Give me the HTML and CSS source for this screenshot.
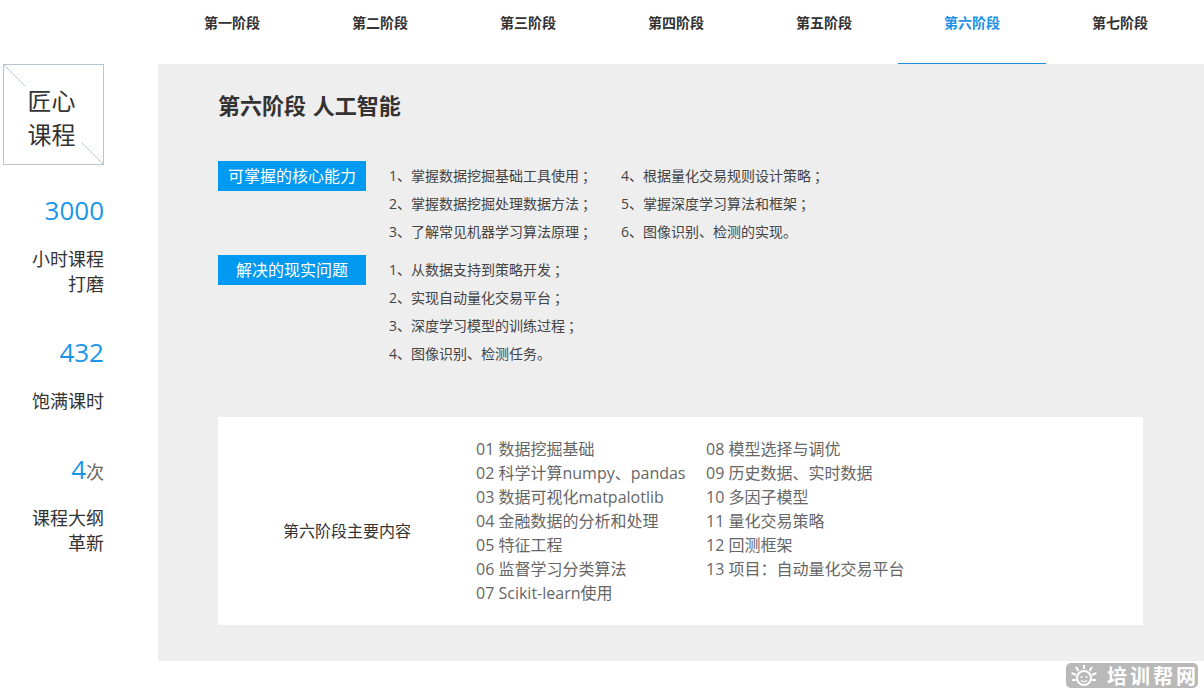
FILE: index.html
```html
<!DOCTYPE html>
<html lang="zh-CN">
<head>
    <meta charset="UTF-8">
    <title>人工智能课程</title>
    <link rel="stylesheet" href="styles.css">
</head>
<body>
    <!-- 阶段导航 -->
    <nav class="navbar">
        <a href="#">第一阶段</a>
        <a href="#">第二阶段</a>
        <a href="#">第三阶段</a>
        <a href="#">第四阶段</a>
        <a href="#">第五阶段</a>
        <a href="#" class="active">第六阶段</a>
        <a href="#">第七阶段</a>
    </nav>

    <div class="main">
        <!-- 左侧 -->
        <aside class="side">
            <div class="logo-box">
                <div>匠心<br>课程</div>
            </div>
            <div class="stat stat-first">
                <div class="stat-num">3000</div>
                <div class="stat-label">小时课程<br>打磨</div>
            </div>
            <div class="stat">
                <div class="stat-num">432</div>
                <div class="stat-label">饱满课时</div>
            </div>
            <div class="stat">
                <div class="stat-num">4<span class="stat-unit">次</span></div>
                <div class="stat-label">课程大纲<br>革新</div>
            </div>
        </aside>

        <!-- 内容 -->
        <section class="panel">
            <h2 class="panel-title">第六阶段 人工智能</h2>

            <div class="block block-first">
                <div class="tag">可掌握的核心能力</div>
                <ul class="list">
                    <li>1、掌握数据挖掘基础工具使用<span class="mark">；</span></li>
                    <li>2、掌握数据挖掘处理数据方法<span class="mark">；</span></li>
                    <li>3、了解常见机器学习算法原理<span class="mark">；</span></li>
                </ul>
                <ul class="list">
                    <li>4、根据量化交易规则设计策略<span class="mark">；</span></li>
                    <li>5、掌握深度学习算法和框架<span class="mark">；</span></li>
                    <li>6、图像识别、检测的实现。</li>
                </ul>
            </div>

            <div class="block">
                <div class="tag">解决的现实问题</div>
                <ul class="list">
                    <li>1、从数据支持到策略开发<span class="mark">；</span></li>
                    <li>2、实现自动量化交易平台<span class="mark">；</span></li>
                    <li>3、深度学习模型的训练过程<span class="mark">；</span></li>
                    <li>4、图像识别、检测任务。</li>
                </ul>
            </div>

            <div class="card">
                <div class="card-label">第六阶段主要内容</div>
                <ul class="card-list card-list-left">
                    <li>01 数据挖掘基础</li>
                    <li>02 科学计算numpy、pandas</li>
                    <li>03 数据可视化matpalotlib</li>
                    <li>04 金融数据的分析和处理</li>
                    <li>05 特征工程</li>
                    <li>06 监督学习分类算法</li>
                    <li>07 Scikit-learn使用</li>
                </ul>
                <ul class="card-list">
                    <li>08 模型选择与调优</li>
                    <li>09 历史数据、实时数据</li>
                    <li>10 多因子模型</li>
                    <li>11 量化交易策略</li>
                    <li>12 回测框架</li>
                    <li>13 项目：自动量化交易平台</li>
                </ul>
            </div>
        </section>
    </div>

    <!-- 水印 -->
    <div class="watermark">
        <svg class="watermark-icon" viewBox="0 0 30 24" width="30" height="24">
            <circle cx="15" cy="14" r="7" fill="none" stroke="#fff" stroke-width="2"/>
            <circle cx="12.500" cy="13" r="1" fill="#fff"/>
            <circle cx="17.500" cy="13" r="1" fill="#fff"/>
            <path d="M12 16.500q3 2.500 6 0" fill="none" stroke="#fff" stroke-width="1.200"/>
            <path d="M15 5V1M9.500 7 7 3M20.500 7 23 3M7 11 2.500 9M23 11l4.500-2M7 16H3M23 16h4" fill="none" stroke="#fff" stroke-width="2"/>
        </svg>
        <span>培训帮网</span>
    </div>
</body>
</html>
```

FILE: styles.css
```css
body {
    margin: 0;
    background-color: #fff;
    color: #333;
    font-family: "Open Sans", "Noto Sans CJK SC", sans-serif;
    width: 1204px;
    height: 693px;
    overflow: hidden;
    position: relative;
}

ul {
    list-style: none;
    margin: 0;
    padding: 0;
}

/* Navbar */
.navbar {
    display: flex;
    height: 64px;
    padding-left: 158px;
}

.navbar a {
    width: 148px;
    height: 63px;
    line-height: 45px;
    text-align: center;
    font-size: 14px;
    font-weight: bold;
    color: #333;
    text-decoration: none;
}

.navbar a.active {
    color: #1c92e6;
    border-bottom: 1px solid #1c8fe0;
}

/* Main */
.main {
    display: flex;
}

/* Side */
.side {
    width: 104px;
    margin-right: 54px;
    text-align: right;
}

.logo-box {
    width: 99px;
    height: 99px;
    margin-left: 3px;
    border: 1px solid #b8c6d4;
    display: flex;
    align-items: center;
    justify-content: center;
    text-align: center;
    font-size: 24px;
    line-height: 34px;
    background-image:
        linear-gradient(45deg, transparent 48%, #b8c6d4 48%, #b8c6d4 52%, transparent 52%),
        linear-gradient(45deg, transparent 48%, #b8c6d4 48%, #b8c6d4 52%, transparent 52%);
    background-size: 21px 21px;
    background-position: left top, right bottom;
    background-repeat: no-repeat;
}

.logo-box div {
    margin: 7px 4px 0 0;
}

.stat {
    margin-top: 35px;
}

.stat-first {
    margin-top: 25px;
}

.stat-num {
    font-size: 26px;
    line-height: 40px;
    color: #1a96e8;
}

.stat-unit {
    font-size: 18px;
    line-height: 1;
    color: #666;
}

.stat-label {
    margin-top: 17px;
    font-size: 18px;
    line-height: 25px;
}

/* Panel */
.panel {
    width: 1046px;
    height: 597px;
    box-sizing: border-box;
    padding: 23px 60px 0;
    background-color: #eee;
}

.panel-title {
    margin: 0;
    font-size: 22px;
    line-height: 36px;
    font-weight: bold;
    word-spacing: 1px;
}

.block {
    display: flex;
    align-items: flex-start;
    margin-top: 10px;
}

.block-first {
    margin-top: 38px;
}

.tag {
    width: 148px;
    height: 30px;
    line-height: 30px;
    margin-right: 23px;
    text-align: center;
    font-size: 16px;
    color: #fff;
    background-color: #0299f0;
}

.list {
    width: 204px;
    margin-right: 28px;
}

.list li {
    height: 28px;
    line-height: 30px;
    font-size: 14px;
    color: #444;
    white-space: nowrap;
}

/* 标点靠右一点 */
.mark {
    margin-left: 3px;
}

/* Card */
.card {
    display: flex;
    width: 925px;
    height: 208px;
    box-sizing: border-box;
    margin-top: 50px;
    padding-top: 20px;
    background-color: #fff;
}

.card-label {
    width: 258px;
    line-height: 189px;
    text-align: center;
    font-size: 16px;
}

.card-list {
    font-size: 16px;
    line-height: 24px;
    color: #666;
}

.card-list li {
    white-space: nowrap;
}

.card-list-left {
    width: 230px;
}

/* Watermark */
.watermark {
    position: absolute;
    left: 1066px;
    top: 663px;
    width: 132px;
    height: 25px;
    display: flex;
    align-items: center;
    gap: 8px;
    padding-left: 3px;
    box-sizing: border-box;
    border-radius: 5px;
    background-color: #b9b9b9;
    color: #fff;
    font-size: 20px;
    font-weight: bold;
    letter-spacing: 3px;
    white-space: nowrap;
}

.watermark-icon {
    flex: none;
}
```
